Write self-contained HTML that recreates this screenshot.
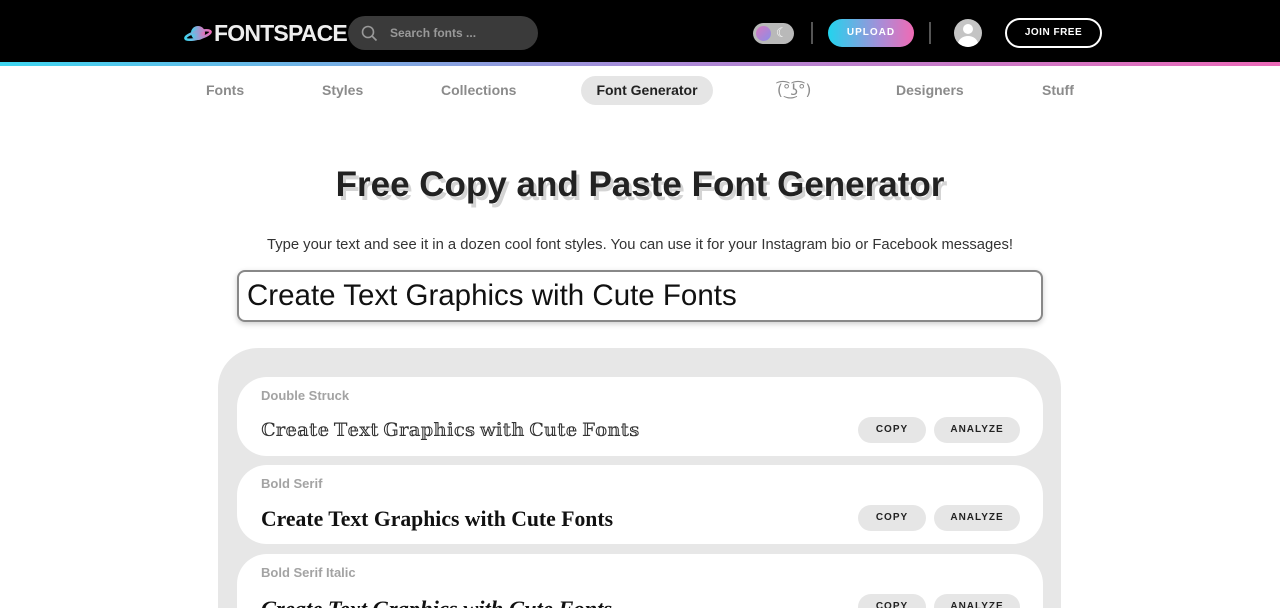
<!DOCTYPE html>
<html><head><meta charset="utf-8"><style>
*{margin:0;padding:0;box-sizing:border-box}
html,body{width:1280px;height:608px;overflow:hidden}
body{background:#fff;font-family:"Liberation Sans","DejaVu Sans",sans-serif;position:relative}
.hdr{position:absolute;left:0;top:0;width:1280px;height:62px;background:#000}
.bar{position:absolute;left:0;top:62px;width:1280px;height:4px;background:linear-gradient(90deg,#3fd6f0,#a78bd8 50%,#ec6ab8)}
.logo{position:absolute;left:214px;top:20px;color:#eee;font-weight:bold;font-size:23px;letter-spacing:-0.8px;line-height:26px}
.search{position:absolute;left:348px;top:16px;width:190px;height:34px;border-radius:17px;background:#3a3a3a;color:#999;font-size:12px;font-weight:bold;line-height:34px;padding-left:42px}
.tog{position:absolute;left:753px;top:23px;width:41px;height:21px;border-radius:11px;background:#b9b9b9}
.tog i{position:absolute;left:3px;top:3px;width:15px;height:15px;border-radius:50%;background:linear-gradient(135deg,#d879c0,#8a8ee8)}
.sep{position:absolute;top:22px;width:2px;height:22px;background:#555}
.up{position:absolute;left:828px;top:19px;width:86px;height:28px;border-radius:14px;background:linear-gradient(90deg,#22d4ee,#a68ed8 60%,#f06ab4);color:#fff;font-size:10px;font-weight:bold;letter-spacing:1px;text-align:center;line-height:28px}
.av{position:absolute;left:954px;top:19px;width:28px;height:28px;border-radius:50%;background:#c4c4c4;overflow:hidden}
.join{position:absolute;left:1005px;top:18px;width:97px;height:30px;border:2px solid #fff;border-radius:15px;color:#fff;font-size:10px;font-weight:bold;text-align:center;line-height:26px;letter-spacing:.5px}
.nav a{position:absolute;top:82px;font-size:14px;font-weight:bold;color:#8b8b8b;line-height:16px}
.nav .act{left:581px;top:76px;width:132px;height:29px;border-radius:15px;background:#e5e5e5;color:#222;text-align:center;line-height:29px}
h1{position:absolute;left:0;width:1280px;top:165px;text-align:center;font-size:35px;font-weight:bold;color:#222;text-shadow:3px 4px 0 #d4d4d4;line-height:40px}
.sub{position:absolute;left:0;width:1280px;top:237px;text-align:center;font-size:14.8px;color:#333}
.inp{position:absolute;left:237px;top:270px;width:806px;height:52px;border:2px solid #888;border-radius:8px;box-shadow:0 2px 6px rgba(0,0,0,.2);font-size:29.5px;line-height:48px;padding-left:8px;color:#111}
.box{position:absolute;left:218px;top:348px;width:843px;height:260px;background:#e7e7e7;border-radius:40px 40px 0 0}
.card{position:absolute;left:237px;width:806px;height:79px;background:#fff;border-radius:30px;overflow:hidden}
.card .t{position:absolute;left:24px;top:11px;font-size:13px;font-weight:bold;color:#a3a3a3}
.card .s{position:absolute;left:24px;top:42px;font-family:"Liberation Serif","DejaVu Serif",serif;font-size:21.7px;color:#111;font-weight:bold;white-space:nowrap}
.btn{position:absolute;top:40px;height:26px;border-radius:13px;background:#e6e6e6;font-size:10px;font-weight:bold;letter-spacing:1px;text-align:center;line-height:26px;color:#222}
</style></head><body>
<div class="hdr"></div><div class="bar"></div>
<svg style="position:absolute;left:184px;top:24px" width="28" height="18" viewBox="0 0 28 18"><defs><linearGradient id="g" x1="0" x2="1"><stop offset="0" stop-color="#3fd6f0"/><stop offset="1" stop-color="#ec6ab8"/></linearGradient></defs><circle cx="14" cy="9" r="7" fill="url(#g)"/><ellipse cx="14" cy="11" rx="13" ry="3.5" fill="none" stroke="url(#g)" stroke-width="2.5" transform="rotate(-15 14 11)"/></svg>
<div class="logo">FONTSPACE</div>
<div class="search"><svg style="position:absolute;left:13px;top:9px" width="17" height="17" viewBox="0 0 17 17"><circle cx="7" cy="7" r="5.5" fill="none" stroke="#999" stroke-width="1.6"/><path d="M11 11l4.5 4.5" stroke="#999" stroke-width="1.6"/></svg>Search fonts ...</div>
<div class="tog"><i></i><span style="position:absolute;left:23px;top:2px;color:#fff;font-size:13px">☾</span></div>
<div class="sep" style="left:811px"></div>
<div class="up">UPLOAD</div>
<div class="sep" style="left:929px"></div>
<div class="av"><div style="position:absolute;left:9px;top:5px;width:10px;height:10px;border-radius:50%;background:#fff"></div><div style="position:absolute;left:4px;top:17px;width:20px;height:16px;border-radius:50%;background:#fff"></div></div>
<div class="join">JOIN FREE</div>
<div class="nav">
<a style="left:206px">Fonts</a><a style="left:322px">Styles</a><a style="left:441px">Collections</a>
<a class="act">Font Generator</a>
<a style="left:777px;font-weight:normal;font-family:'DejaVu Sans',sans-serif;font-size:15px">(͡°͜ʖ͡°)</a>
<a style="left:896px">Designers</a><a style="left:1042px">Stuff</a></div>
<h1>Free Copy and Paste Font Generator</h1>
<div class="sub">Type your text and see it in a dozen cool font styles. You can use it for your Instagram bio or Facebook messages!</div>
<div class="inp">Create Text Graphics with Cute Fonts</div>
<div class="box"></div>
<div class="card" style="top:377px"><div class="t">Double Struck</div><div class="s" style="font-weight:normal;color:#333;font-size:18.4px;top:43px">ℂ𝕣𝕖𝕒𝕥𝕖 𝕋𝕖𝕩𝕥 𝔾𝕣𝕒𝕡𝕙𝕚𝕔𝕤 𝕨𝕚𝕥𝕙 ℂ𝕦𝕥𝕖 𝔽𝕠𝕟𝕥𝕤</div><div class="btn" style="left:621px;width:68px">COPY</div><div class="btn" style="left:697px;width:86px">ANALYZE</div></div>
<div class="card" style="top:465px"><div class="t">Bold Serif</div><div class="s">Create Text Graphics with Cute Fonts</div><div class="btn" style="left:621px;width:68px">COPY</div><div class="btn" style="left:697px;width:86px">ANALYZE</div></div>
<div class="card" style="top:554px;height:54px;border-radius:30px 30px 0 0"><div class="t">Bold Serif Italic</div><div class="s" style="font-style:italic;font-size:22.5px">Create Text Graphics with Cute Fonts</div><div class="btn" style="left:621px;width:68px">COPY</div><div class="btn" style="left:697px;width:86px">ANALYZE</div></div>
</body></html>
